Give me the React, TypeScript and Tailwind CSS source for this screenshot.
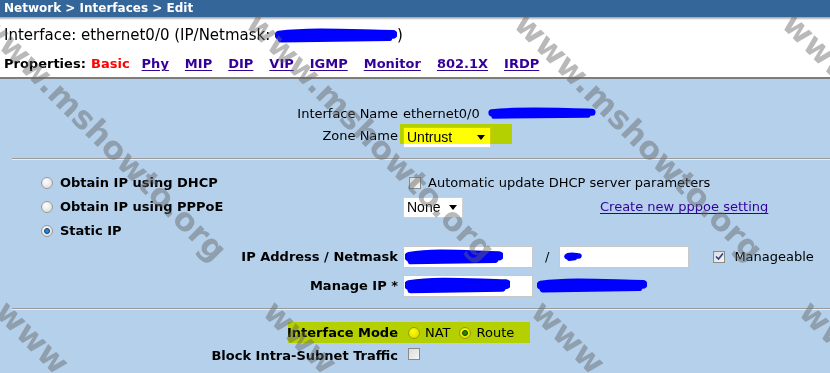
import React from "react";

const font = "font-['DejaVu_Sans',Verdana,sans-serif]";

// blue marker scribble that hides the addresses in the screenshot
const Scribble = ({ w, h }: { w: number; h: number }) => (
  <svg width={w} height={h} viewBox={`0 0 ${w} ${h}`} className="block">
    <path
      d={`M4 ${h * 0.45} C ${w * 0.3} ${h * 0.2}, ${w * 0.6} ${h * 0.35}, ${w - 4} ${h * 0.4}`}
      stroke="#0000ff"
      strokeWidth={h * 0.55}
      strokeLinecap="round"
      fill="none"
    />
    <path
      d={`M6 ${h * 0.7} L ${w - 8} ${h * 0.62}`}
      stroke="#0000ff"
      strokeWidth={h * 0.4}
      strokeLinecap="round"
      fill="none"
    />
  </svg>
);

const Radio = ({ checked = false }: { checked?: boolean }) => (
  <span className="relative inline-flex h-[12px] w-[12px] shrink-0 items-center justify-center rounded-full border border-[#9a9b9b] bg-[radial-gradient(circle_at_40%_35%,#ffffff,#d4d4d4)]">
    {checked && (
      <span className="h-[6px] w-[6px] rounded-full border border-[#0b3f6e] bg-[#2b86d6]" />
    )}
  </span>
);

const Checkbox = ({ checked = false }: { checked?: boolean }) => (
  <span className="inline-flex h-[12px] w-[12px] shrink-0 items-center justify-center border border-[#8a8a8a] bg-gradient-to-br from-[#dcdcdc] to-[#f6f6f6]">
    {checked && (
      <svg width="9" height="9" viewBox="0 0 9 9">
        <path d="M1 4.5 L3.5 7 L8 1.5" stroke="#2a3f8e" strokeWidth="1.6" fill="none" />
      </svg>
    )}
  </span>
);

const Select = ({ value, w }: { value: string; w: number }) => (
  <div
    className="flex h-[21px] items-center justify-between border border-[#d0d0d0] bg-white pl-[3px] pr-[5px] font-['Liberation_Sans',Arial,sans-serif] text-[14px] text-black"
    style={{ width: w }}
  >
    <span>{value}</span>
    <svg width="8" height="5" viewBox="0 0 8 5">
      <path d="M0 0 H8 L4 5 Z" fill="#000" />
    </svg>
  </div>
);

const Input = ({ children, w = 130 }: { children?: React.ReactNode; w?: number }) => (
  <div
    className="flex h-[22px] items-center border border-[#c8c8c8] bg-white pl-[1px]"
    style={{ width: w }}
  >
    {children}
  </div>
);

const Link = ({ children }: { children: React.ReactNode }) => (
  <span className="text-[#330099] underline underline-offset-2">{children}</span>
);

const tabs = ["Phy", "MIP", "DIP", "VIP", "IGMP", "Monitor", "802.1X", "IRDP"];

const Watermarks = () => {
  const marks: { x: number; y: number }[] = [];
  for (let m = -1; m <= 1; m++) {
    for (let i = -4; i <= 3; i++) {
      const x = 252 + i * 268 + m * 285;
      const y = 18 + m * 288;
      if (x > -400 && x < 830) marks.push({ x, y });
    }
  }
  return (
    <div className="pointer-events-none absolute inset-0 overflow-hidden">
      {marks.map((p, k) => (
        <div
          key={k}
          className="absolute h-[40px] origin-left rotate-45 whitespace-nowrap font-['DejaVu_Sans',sans-serif] text-[32px] font-bold leading-[40px] text-[rgba(100,100,100,0.45)]"
          style={{ left: p.x, top: p.y - 20 }}
        >
          www.mshowto.org
        </div>
      ))}
    </div>
  );
};

export default function App() {
  return (
    <div className={`relative h-[373px] w-[830px] overflow-hidden bg-white text-[13px] text-black ${font}`}>
      <div className="h-[17px] bg-[#346699] pl-[4px] text-[12px] font-bold leading-[17px] text-white">
        Network &gt; Interfaces &gt; Edit
      </div>
      <div className="h-[3px] bg-gradient-to-b from-[#9a9a9a] to-white" />

      <div className="flex h-[31px] items-center pl-[4px] text-[15px]">
        <span>Interface: ethernet0/0 (IP/Netmask:&nbsp;</span>
        <Scribble w={122} h={16} />
        <span>)</span>
      </div>
      <div className="flex h-[28px] items-center border-b-2 border-[#7d7d7d] pl-[4px] font-bold">
        <span className="w-[87px] shrink-0 whitespace-nowrap">Properties:</span>
        <span className="mr-[12px] text-[#ff0000]">Basic</span>
        <div className="flex items-center gap-[16px]">
          {tabs.map((t) => (
            <Link key={t}>{t}</Link>
          ))}
        </div>
      </div>

      <div className="h-[294px] bg-[#b4d0eb] pt-[24px]">
        <div className="flex h-[21px] items-center">
          <span className="w-[398px] text-right">Interface Name</span>
          <span className="ml-[5px]">ethernet0/0</span>
          <span className="ml-[8px]">
            <Scribble w={108} h={13} />
          </span>
        </div>
        <div className="relative flex h-[24px] items-center">
          <span className="w-[398px] text-right">Zone Name</span>
          <span className="ml-[5px] mt-[2px]">
            <Select value="Untrust" w={88} />
          </span>
          <div className="absolute left-[400px] top-0 h-[20px] w-[112px] bg-[#ffff00] mix-blend-multiply" />
        </div>

        <div className="ml-[12px] mt-[10px] border-t border-b border-t-[#9a9a9a] border-b-[#e4eef8]" />

        <div className="mt-[11px] flex h-[24px] items-center">
          <div className="flex w-[403px] items-center gap-[7px] pl-[41px] font-bold">
            <Radio />
            <span>Obtain IP using DHCP</span>
          </div>
          <div className="ml-[6px] flex items-center gap-[7px]">
            <Checkbox />
            <span>Automatic update DHCP server parameters</span>
          </div>
        </div>
        <div className="flex h-[24px] items-center">
          <div className="flex w-[403px] items-center gap-[7px] pl-[41px] font-bold">
            <Radio />
            <span>Obtain IP using PPPoE</span>
          </div>
          <Select value="None" w={60} />
          <span className="ml-[137px]">
            <Link>Create new pppoe setting</Link>
          </span>
        </div>
        <div className="flex h-[24px] items-center">
          <div className="flex w-[403px] items-center gap-[7px] pl-[41px] font-bold">
            <Radio checked />
            <span>Static IP</span>
          </div>
        </div>

        <div className="flex h-[28px] items-center">
          <span className="w-[398px] text-right font-bold">IP Address / Netmask</span>
          <span className="ml-[5px]">
            <Input>
              <Scribble w={98} h={17} />
            </Input>
          </span>
          <span className="ml-[12px]">/</span>
          <span className="ml-[10px]">
            <Input>
              <span className="ml-[2px]">
                <Scribble w={20} h={10} />
              </span>
            </Input>
          </span>
          <span className="ml-[24px]">
            <Checkbox checked />
          </span>
          <span className="ml-[9px]">Manageable</span>
        </div>
        <div className="flex h-[30px] items-center">
          <span className="w-[398px] text-right font-bold">Manage IP *</span>
          <span className="ml-[5px]">
            <Input>
              <Scribble w={105} h={18} />
            </Input>
          </span>
          <span className="ml-[4px]">
            <Scribble w={110} h={16} />
          </span>
        </div>

        <div className="ml-[12px] mt-[7px] border-t border-b border-t-[#9a9a9a] border-b-[#e4eef8]" />

        <div className="relative mt-[11px] flex h-[24px] items-center">
          <span className="w-[398px] text-right font-bold">Interface Mode</span>
          <span className="ml-[10px] flex items-center gap-[5px]">
            <Radio />
            <span>NAT</span>
          </span>
          <span className="ml-[8px] flex items-center gap-[6px]">
            <Radio checked />
            <span>Route</span>
          </span>
          <div className="absolute left-[288px] top-[1px] h-[21px] w-[242px] bg-[#ffff00] mix-blend-multiply" />
        </div>
        <div className="flex h-[22px] items-center">
          <span className="w-[398px] text-right font-bold">Block Intra-Subnet Traffic</span>
          <span className="ml-[10px]">
            <Checkbox />
          </span>
        </div>
      </div>

      <Watermarks />
    </div>
  );
}
